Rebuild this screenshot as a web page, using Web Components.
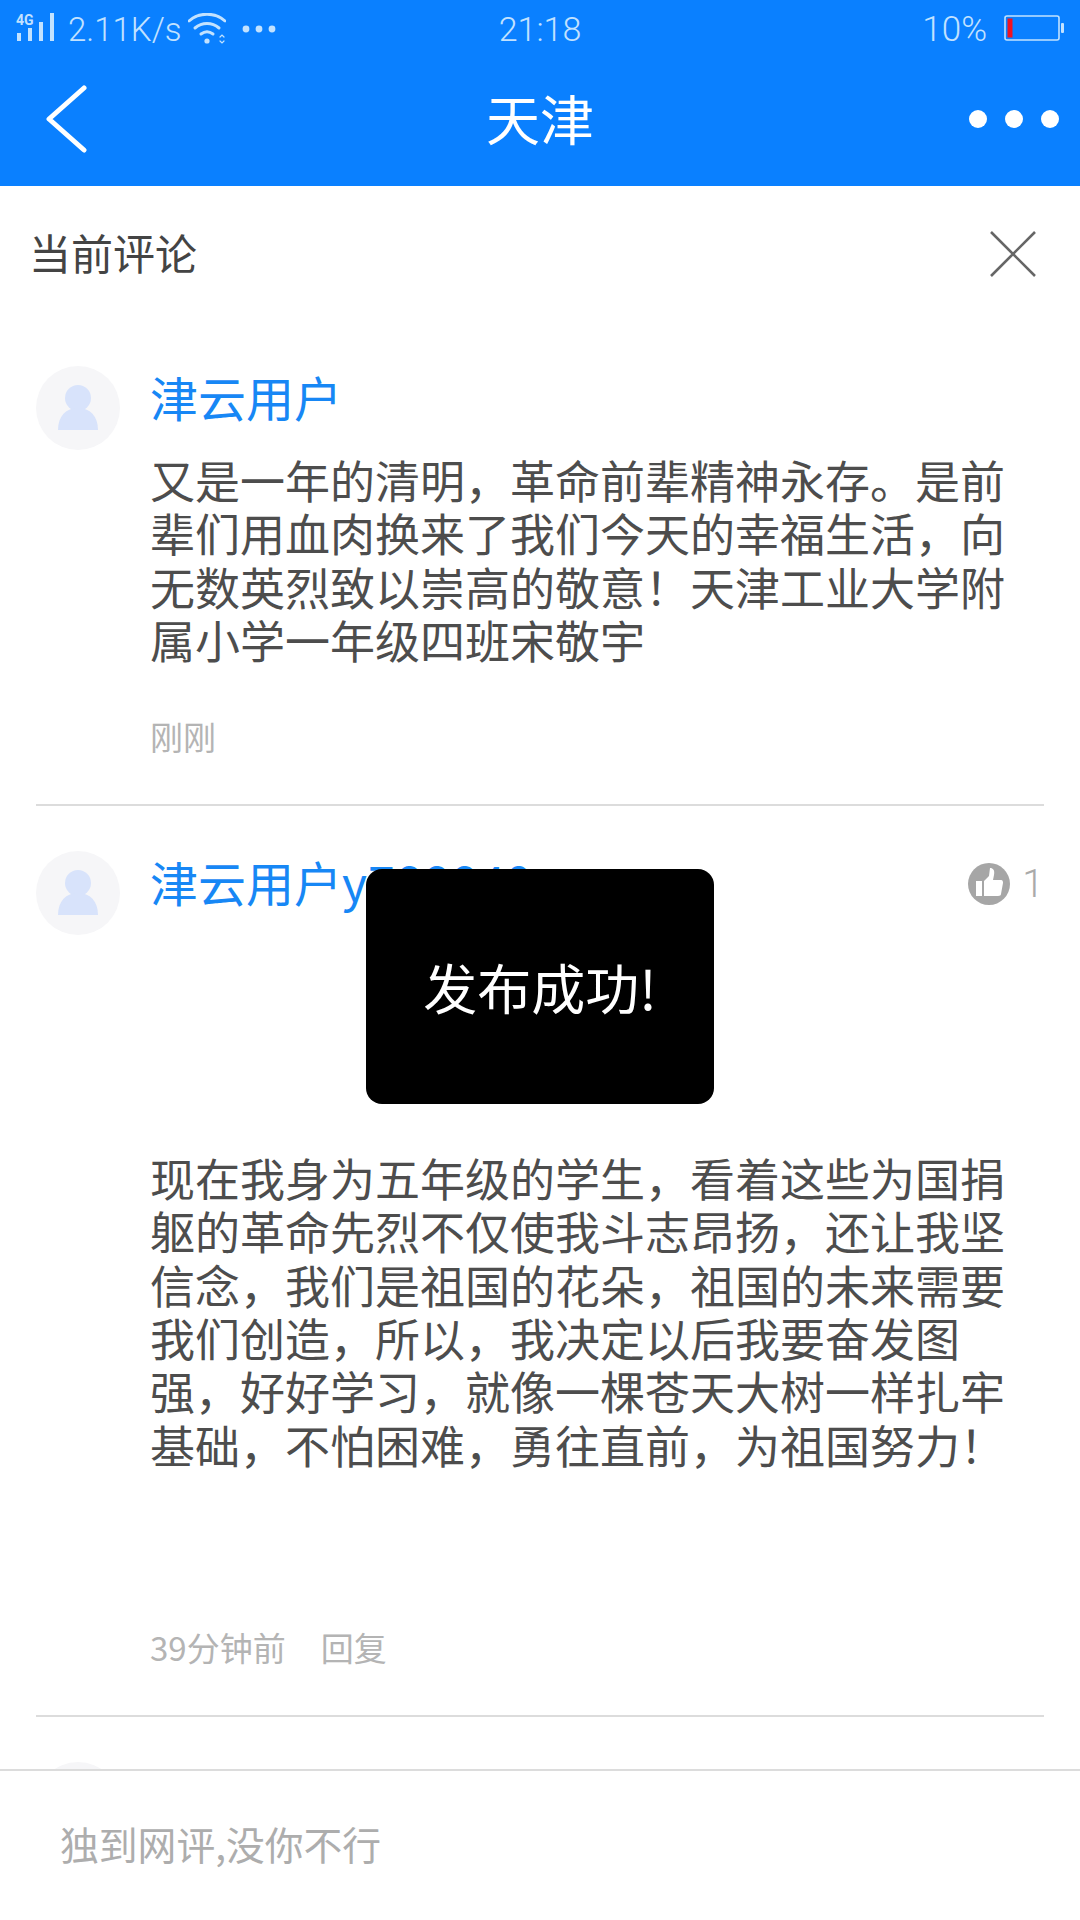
<!DOCTYPE html>
<html lang="zh">
<head>
<meta charset="utf-8">
<title>天津</title>
<style>
html, body { margin: 0; padding: 0; }
body {
    width: 1080px;
    height: 1920px;
    overflow: hidden;
    background: #fff;
    font-family: "Noto Sans CJK SC", "Liberation Sans", sans-serif;
}
app-page { width: 1080px; height: 1920px; }
</style>
</head>
<body>
<app-page>
    <status-bar slot="top"></status-bar>
    <nav-header slot="top">天津</nav-header>
    <panel-title slot="top">当前评论</panel-title>

    <comment-item name="津云用户" time="刚刚">又是一年的清明，革命前辈精神永存。是前辈们用血肉换来了我们今天的幸福生活，向无数英烈致以崇高的敬意！天津工业大学附属小学一年级四班宋敬宇</comment-item>
    <comment-item name="津云用户" handle="y788849" time="39分钟前" reply likes="1" lead="213" trail="106">现在我身为五年级的学生，看着这些为国捐躯的革命先烈不仅使我斗志昂扬，还让我坚信念，我们是祖国的花朵，祖国的未来需要我们创造，所以，我决定以后我要奋发图强，好好学习，就像一棵苍天大树一样扎牢基础，不怕困难，勇往直前，为祖国努力！</comment-item>
    <comment-item></comment-item>

    <reply-bar slot="bottom">独到网评,没你不行</reply-bar>
    <toast-box slot="overlay">发布成功!</toast-box>
</app-page>

<script>
const AVATAR = `<svg width="84" height="84" viewBox="0 0 84 84">
    <circle cx="42" cy="42" r="42" fill="#f6f6f8"/>
    <circle cx="42" cy="32" r="13" fill="#d8e3fb"/>
    <path d="M22 64c0-14 8-22 20-22s20 8 20 22z" fill="#d8e3fb"/>
</svg>`

class AppPage extends HTMLElement {
    connectedCallback() {
        const root = this.attachShadow({ mode: 'open' })
        root.innerHTML = `
<style>
:host { display: flex; flex-direction: column; position: relative; overflow: hidden; }
.list { flex: 1; min-height: 0; overflow: hidden; }
</style>
<slot name="top"></slot>
<div class="list"><slot></slot></div>
<slot name="bottom"></slot>
<slot name="overlay"></slot>`
    }
}

class StatusBar extends HTMLElement {
    connectedCallback() {
        const root = this.attachShadow({ mode: 'open' })
        root.innerHTML = `
<style>
:host {
    display: flex; align-items: center; height: 58px; padding: 0 16px;
    background: #0a80ff; color: #c2e2ff;
    font: 300 33px Roboto, "Liberation Sans", sans-serif;
}
.side { flex: 1; display: flex; align-items: center; }
.right { justify-content: flex-end; }
.speed { margin-left: 14px; }
.wifi { margin-left: 6px; }
.more { margin-left: 16px; }
.clock { font-size: 34px; }
.pct { margin-right: 17px; font-size: 35px; }
.batt { margin-bottom: 3px; }
.net { font-size: 14px; font-weight: 700; fill: #c2e2ff; font-family: Roboto, sans-serif; }
</style>
<div class="side">
    <svg width="38" height="44" viewBox="0 -7 38 44">
        <text class="net" x="0" y="11">4G</text>
        <rect x="1" y="19" width="4" height="8" fill="#c2e2ff"/>
        <rect x="12" y="14" width="4" height="13" fill="#c2e2ff"/>
        <rect x="23" y="8" width="4" height="19" fill="#c2e2ff"/>
        <rect x="34" y="-1" width="4" height="28" fill="#c2e2ff"/>
    </svg>
    <span class="speed">2.11K/s</span>
    <svg class="wifi" width="38" height="32" viewBox="0 0 38 32" fill="none" stroke="#c2e2ff" stroke-width="3" stroke-linecap="round">
        <path d="M1 8c10-9 26-9 36 0"/>
        <path d="M7 15c7-6 17-6 24 0"/>
        <path d="M13 21c4-3 8-3 12 0"/>
        <circle cx="19" cy="28" r="2.6" fill="#c2e2ff" stroke="none"/>
        <path d="M32 24l2-2 2 2M32 28l2 2 2-2" stroke-width="1.2"/>
    </svg>
    <svg class="more" width="34" height="8" viewBox="0 0 34 8" fill="#c2e2ff">
        <circle cx="4" cy="4" r="3.4"/><circle cx="17" cy="4" r="3.4"/><circle cx="30" cy="4" r="3.4"/>
    </svg>
</div>
<div class="clock">21:18</div>
<div class="side right">
    <span class="pct">10%</span>
    <svg class="batt" width="60" height="26" viewBox="0 0 60 26">
        <rect x="1" y="1" width="54" height="24" rx="2" fill="none" stroke="#c2e2ff" stroke-width="1.6"/>
        <rect x="3.5" y="3.5" width="5" height="19" fill="#f1121f"/>
        <rect x="57" y="8" width="3" height="10" rx="1" fill="#c2e2ff"/>
    </svg>
</div>`
    }
}

class NavHeader extends HTMLElement {
    connectedCallback() {
        const root = this.attachShadow({ mode: 'open' })
        root.innerHTML = `
<style>
:host {
    display: grid; grid-template-columns: 1fr auto 1fr; align-items: center;
    height: 128px; padding: 0 20px 6px; box-sizing: border-box;
    background: #0a80ff; color: #fff; font-size: 54px;
}
svg { margin-left: 26px; }
.title { margin-bottom: 4px; }
.dots { justify-self: end; display: flex; gap: 18px; margin-right: 1px; }
.dots i { width: 18px; height: 18px; border-radius: 50%; background: #fff; }
</style>
<svg width="42" height="68" viewBox="0 0 42 68" fill="none" stroke="#fff" stroke-width="5" stroke-linecap="round" stroke-linejoin="round">
    <path d="M38 3L3 34l35 31"/>
</svg>
<div class="title"><slot></slot></div>
<div class="dots"><i></i><i></i><i></i></div>`
    }
}

class PanelTitle extends HTMLElement {
    connectedCallback() {
        const root = this.attachShadow({ mode: 'open' })
        root.innerHTML = `
<style>
:host {
    display: flex; justify-content: space-between; align-items: center;
    height: 135px; padding: 0 44px 0 29px; box-sizing: border-box;
    color: #444; font-size: 42px; background: #fff;
}
.label { margin-bottom: 5px; }
</style>
<div class="label"><slot></slot></div>
<svg width="46" height="46" viewBox="0 0 46 46" stroke="#666" stroke-width="2.6">
    <path d="M1 1l44 44M45 1L1 45"/>
</svg>`
    }
}

class CommentItem extends HTMLElement {
    connectedCallback() {
        const root = this.attachShadow({ mode: 'open' })
        const name = this.getAttribute('name') || ''
        const handle = this.getAttribute('handle') || ''
        const time = this.getAttribute('time') || ''
        const likes = this.getAttribute('likes')
        const lead = Number(this.getAttribute('lead') || 0)
        const trail = Number(this.getAttribute('trail') || 0)
        root.innerHTML = `
<style>
:host {
    display: grid; grid-template-columns: 84px 1fr; column-gap: 30px;
    margin: 0 36px; padding: 45px 0 0;
    border-bottom: 2px solid #dcdcdc;
}
.head { display: flex; justify-content: space-between; align-items: center; height: 60px; }
.name { color: #1787f5; font-size: 48px; line-height: 60px; white-space: nowrap; }
.handle { letter-spacing: 1px; }
.likes { display: flex; align-items: center; gap: 12px; margin-top: 5px; color: #aaa; font: 300 39px Roboto, sans-serif; }
.body {
    width: 872px; margin-top: 27px; color: #4d4d4d; font-size: 45px; line-height: 53.3px;
    padding-top: ${lead}px; padding-bottom: ${trail}px;
}
.meta { display: flex; gap: 35px; margin-top: 48px; padding-bottom: 46px; color: #b4b4b4; font-size: 33px; line-height: 44px; }
</style>
<div>${AVATAR}</div>
<div>
    <div class="head">
        <div class="name">${name}<span class="handle">${handle}</span></div>
        ${likes ? `<div class="likes">
            <svg width="42" height="42" viewBox="0 0 42 42">
                <circle cx="21" cy="21" r="21" fill="#a6a6a6"/>
                <rect x="8" y="18" width="6" height="15" fill="#fff"/>
                <path d="M16 18l5-5 1-8c3 0 5 2 4 7l-1 5h8c2 0 2 2 2 3l-2 11c0 1-1 2-3 2H16z" fill="#fff"/>
            </svg>
            <span>${likes}</span></div>` : ''}
    </div>
    <div class="body"><slot></slot></div>
    <div class="meta"><span>${time}</span>${this.hasAttribute('reply') ? '<span>回复</span>' : ''}</div>
</div>`
    }
}

class ReplyBar extends HTMLElement {
    connectedCallback() {
        const root = this.attachShadow({ mode: 'open' })
        root.innerHTML = `
<style>
:host {
    display: flex; align-items: center; height: 151px; padding: 0 0 5px 60px; box-sizing: border-box;
    border-top: 2px solid #dcdcdc; background: #fff; color: #adadad; font-size: 38.8px;
}
</style>
<slot></slot>`
    }
}

class ToastBox extends HTMLElement {
    connectedCallback() {
        const root = this.attachShadow({ mode: 'open' })
        root.innerHTML = `
<style>
:host {
    position: absolute; left: 366px; top: 869px; width: 348px; height: 235px;
    display: flex; align-items: center; justify-content: center;
    background: #000; color: #fff; border-radius: 16px; font-size: 54px;
}
</style>
<slot></slot>`
    }
}

customElements.define('app-page', AppPage)
customElements.define('status-bar', StatusBar)
customElements.define('nav-header', NavHeader)
customElements.define('panel-title', PanelTitle)
customElements.define('comment-item', CommentItem)
customElements.define('reply-bar', ReplyBar)
customElements.define('toast-box', ToastBox)
</script>
</body>
</html>
